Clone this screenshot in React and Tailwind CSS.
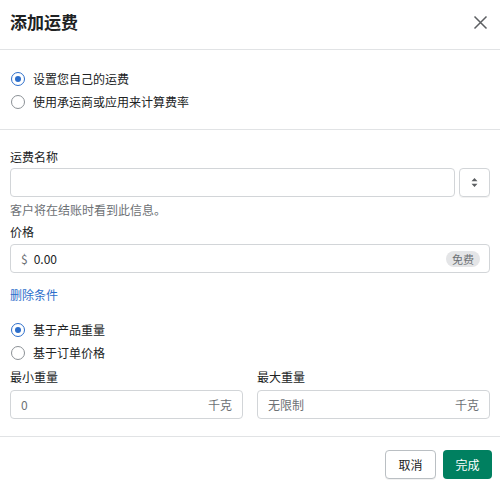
import React, { useState } from 'react';

const FONT = { fontFamily: '"Noto Sans CJK SC", "Noto Sans", sans-serif' };

function Radio({ checked, label, onClick }) {
  return (
    <label className="flex items-center h-[23px] gap-[8px] cursor-pointer" onClick={onClick}>
      <span
        className={`w-[14px] h-[14px] rounded-full border-[1.5px] flex items-center justify-center ${
          checked ? 'border-[#2c6ecb]' : 'border-[#8c9196]'
        }`}
      >
        {checked && <span className="w-[6px] h-[6px] rounded-full bg-[#2c6ecb]" />}
      </span>
      <span className="text-[12px] text-[#202223] leading-[18px]">{label}</span>
    </label>
  );
}

export default function App() {
  const [rateType, setRateType] = useState('own');
  const [condition, setCondition] = useState('weight');

  return (
    <div className="w-[500px] h-[487px] bg-white flex flex-col text-[#202223]" style={FONT}>
      {/* header */}
      <div className="h-[50px] flex items-center justify-between pl-[10px] pr-[12px] pb-[5px] border-b border-[#e1e3e5]">
        <h1 className="text-[17px] font-bold leading-[24px]">添加运费</h1>
        <button className="w-[16px] h-[16px] flex items-center justify-center text-[#5c5f62]">
          <svg width="15" height="15" viewBox="0 0 15 15" fill="none" stroke="currentColor" strokeWidth="1.5">
            <path d="M1.5 1.5 L13.5 13.5 M13.5 1.5 L1.5 13.5" />
          </svg>
        </button>
      </div>

      {/* rate type */}
      <div className="px-[11px] pt-[17px] pb-[16px] border-b border-[#e1e3e5] flex flex-col">
        <Radio checked={rateType === 'own'} label="设置您自己的运费" onClick={() => setRateType('own')} />
        <Radio checked={rateType === 'app'} label="使用承运商或应用来计算费率" onClick={() => setRateType('app')} />
      </div>

      {/* form */}
      <div className="px-[10px] pt-[18px] pb-[17px] flex flex-col border-b border-[#e1e3e5]">
        <div className="text-[12px] leading-[18px]">运费名称</div>
        <div className="flex gap-[4px] mt-[2px]">
          <input className="flex-1 h-[29px] border border-[#d2d5d8] rounded-[4px] px-[10px] text-[12px] outline-none" />
          <button className="w-[31px] h-[29px] border border-[#d2d5d8] rounded-[4px] flex items-center justify-center shadow-[0_1px_0_rgba(0,0,0,0.05)]">
            <svg width="7" height="11" viewBox="0 0 7 11" fill="#5c5f62">
              <path d="M3.5 1 L6.5 4.2 H0.5 Z M3.5 10 L6.5 6.8 H0.5 Z" />
            </svg>
          </button>
        </div>
        <div className="text-[12px] leading-[18px] text-[#6d7175] mt-[4px]">客户将在结账时看到此信息。</div>

        <div className="text-[12px] leading-[18px] mt-[4px]">价格</div>
        <div className="h-[29px] mt-[3px] border border-[#d2d5d8] rounded-[4px] flex items-center pl-[10px] pr-[9px]">
          <span className="text-[12px] text-[#6d7175]">$</span>
          <span className="text-[12px] text-[#202223] ml-[6px]">0.00</span>
          <span className="ml-auto h-[16px] px-[6px] rounded-full bg-[#e4e5e7] text-[11px] leading-[16px] text-[#6d7175]">免费</span>
        </div>

        <a className="text-[12px] leading-[18px] text-[#2c6ecb] mt-[13px] w-fit cursor-pointer">删除条件</a>

        <div className="flex flex-col mt-[14px] pl-[1px]">
          <Radio checked={condition === 'weight'} label="基于产品重量" onClick={() => setCondition('weight')} />
          <Radio checked={condition === 'price'} label="基于订单价格" onClick={() => setCondition('price')} />
        </div>

        <div className="grid grid-cols-2 gap-[14px] mt-[4px]">
          <div className="flex flex-col">
            <div className="text-[12px] leading-[18px]">最小重量</div>
            <div className="h-[29px] mt-[4px] border border-[#d2d5d8] rounded-[4px] flex items-center px-[10px] text-[12px] text-[#6d7175]">
              <span>0</span>
              <span className="ml-auto">千克</span>
            </div>
          </div>
          <div className="flex flex-col">
            <div className="text-[12px] leading-[18px]">最大重量</div>
            <div className="h-[29px] mt-[4px] border border-[#d2d5d8] rounded-[4px] flex items-center px-[10px] text-[12px] text-[#6d7175]">
              <span>无限制</span>
              <span className="ml-auto">千克</span>
            </div>
          </div>
        </div>
      </div>

      {/* footer */}
      <div className="flex justify-end gap-[7px] pt-[13px] pr-[8px]">
        <button className="h-[29px] w-[51px] border border-[#babfc3] rounded-[4px] text-[12px] text-[#202223] bg-white shadow-[0_1px_0_rgba(0,0,0,0.05)]">
          取消
        </button>
        <button className="h-[29px] w-[49px] rounded-[4px] text-[12px] text-white bg-[#008060]">完成</button>
      </div>
    </div>
  );
}
